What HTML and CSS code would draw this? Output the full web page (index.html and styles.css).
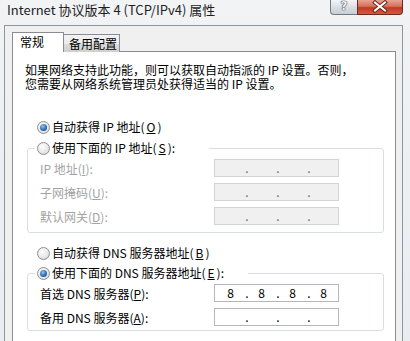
FILE: index.html
```html
<!DOCTYPE html>
<html lang="zh-CN">
<head>
    <meta charset="UTF-8">
    <title>Internet 协议版本 4 (TCP/IPv4) 属性</title>
    <link rel="stylesheet" href="styles.css">
</head>
<body>
    <!-- Title bar -->
    <div class="titlebar">
        <span class="title">Internet 协议版本 4 (TCP/IPv4) 属性</span>
        <div class="caption-btns">
            <span class="btn-help">?</span>
            <span class="btn-close">
                <svg width="46" height="15" viewBox="0 0 46 15">
                    <path d="M18 3.5 L28 11.5 M28 3.5 L18 11.5" stroke="#6b2418" stroke-width="4" stroke-linecap="square"/>
                    <path d="M18 3.5 L28 11.5 M28 3.5 L18 11.5" stroke="#fff" stroke-width="2" stroke-linecap="square"/>
                </svg>
            </span>
        </div>
    </div>

    <div class="client">
        <!-- Tabs -->
        <div class="tabs">
            <span class="tab active">常规</span>
            <span class="tab">备用配置</span>
        </div>

        <div class="panel">
            <p class="intro">如果网络支持此功能，则可以获取自动指派的 IP 设置。否则，<br>您需要从网络系统管理员处获得适当的 IP 设置。</p>

            <div class="option"><span class="radio on"></span>自动获得 IP 地址(<u>O</u>)</div>

            <fieldset class="group disabled">
                <legend class="option ip-legend"><span class="radio"></span>使用下面的 IP 地址(<u>S</u>):</legend>
                <div class="field">
                    <span class="label">IP 地址(<u>I</u>):</span>
                    <span class="ip"><span class="oct"></span><span class="dot">.</span><span class="oct"></span><span class="dot">.</span><span class="oct"></span><span class="dot">.</span><span class="oct"></span></span>
                </div>
                <div class="field">
                    <span class="label">子网掩码(<u>U</u>):</span>
                    <span class="ip"><span class="oct"></span><span class="dot">.</span><span class="oct"></span><span class="dot">.</span><span class="oct"></span><span class="dot">.</span><span class="oct"></span></span>
                </div>
                <div class="field">
                    <span class="label">默认网关(<u>D</u>):</span>
                    <span class="ip"><span class="oct"></span><span class="dot">.</span><span class="oct"></span><span class="dot">.</span><span class="oct"></span><span class="dot">.</span><span class="oct"></span></span>
                </div>
            </fieldset>

            <div class="option dns-auto"><span class="radio"></span>自动获得 DNS 服务器地址(<u>B</u>)</div>

            <fieldset class="group dns-group">
                <legend class="option dns-legend"><span class="radio on"></span>使用下面的 DNS 服务器地址(<u>E</u>):</legend>
                <div class="field">
                    <span class="label">首选 DNS 服务器(<u>P</u>):</span>
                    <span class="ip"><span class="oct">8</span><span class="dot">.</span><span class="oct">8</span><span class="dot">.</span><span class="oct">8</span><span class="dot">.</span><span class="oct">8</span></span>
                </div>
                <div class="field">
                    <span class="label">备用 DNS 服务器(<u>A</u>):</span>
                    <span class="ip"><span class="oct"></span><span class="dot">.</span><span class="oct"></span><span class="dot">.</span><span class="oct"></span><span class="dot">.</span><span class="oct"></span></span>
                </div>
            </fieldset>
        </div>
    </div>
</body>
</html>
```

FILE: styles.css
```css
body {
    margin: 0;
    width: 410px;
    height: 341px;
    overflow: hidden;
    background: linear-gradient(#f1f3f5, #e9edf1);
    font-family: "Noto Sans CJK SC", sans-serif;
    font-size: 12px;
    color: #000;
}

/* Title bar */
.titlebar {
    height: 25px;
    display: flex;
    justify-content: space-between;
    align-items: flex-start;
}

.title {
    padding-left: 7px;
    line-height: 20px;
    font-size: 13px;
    color: #1e1e1e;
}

.caption-btns {
    display: flex;
    margin-right: 7px;
}

.btn-help {
    width: 27px;
    height: 15px;
    box-sizing: border-box;
    border: 1px solid #707b87;
    border-top: none;
    border-right: none;
    border-radius: 0 0 0 4px;
    background: linear-gradient(#f4f5f6, #d9dde2 55%, #c9ced4);
    text-align: center;
    line-height: 13px;
    font-family: "DejaVu Sans", sans-serif;
    font-size: 12px;
    font-weight: bold;
    color: #eef0f2;
    text-shadow: 0 0 1px #3c4650, 0 0 1px #3c4650, 0 0 1px #3c4650;
}

.btn-close {
    width: 46px;
    height: 15px;
    box-sizing: border-box;
    border: 1px solid #6f2a20;
    border-top: none;
    border-radius: 0 0 4px 0;
    background: linear-gradient(#e8a595, #d4705c 45%, #c13a24 55%, #d15a3f);
}

.btn-close svg {
    display: block;
    margin: -1px 0 0 -1px;
}

/* Client area */
.client {
    margin: 0 7px 0 4px;
    height: 316px;
    background: #f0f0f0;
    border: 1px solid #8e969e;
    border-bottom: none;
}

.tabs {
    display: flex;
    align-items: flex-end;
    margin: 6px 0 -1px 7px;
    height: 20px;
}

.tab {
    box-sizing: border-box;
    height: 18px;
    width: 57px;
    margin-left: -1px;
    padding-left: 5px;
    border: 1px solid #898c95;
    border-bottom: none;
    background: linear-gradient(#f2f2f2, #ebebeb 50%, #dddddd 51%, #cfcfcf);
    line-height: 17px;
}

.tab.active {
    position: relative;
    z-index: 1;
    height: 20px;
    width: 52px;
    margin-left: 0;
    padding-left: 7px;
    background: #fff;
    line-height: 18px;
}

.panel {
    margin-left: 7px;
    width: 384px;
    box-sizing: border-box;
    height: 290px;
    background: #fff;
    border: 1px solid #898c95;
    border-bottom: none;
}

.intro {
    margin: 11px 0 0 12px;
    line-height: 14px;
    white-space: nowrap;
}

/* Radio options */
.option {
    display: flex;
    align-items: center;
    gap: 2px;
    height: 16px;
    line-height: 16px;
    white-space: nowrap;
}

.panel > .option {
    margin: 28px 0 0 24px;
}

.panel > .dns-auto {
    margin-top: 12px;
}

.radio {
    width: 13px;
    height: 13px;
    box-sizing: border-box;
    border-radius: 50%;
    border: 1px solid #8f8f8f;
    background: radial-gradient(circle at 40% 35%, #ffffff, #e6e6e6 60%, #cfcfcf);
    display: flex;
    align-items: center;
    justify-content: center;
}

.radio.on::after {
    content: "";
    width: 7px;
    height: 7px;
    border-radius: 50%;
    background: radial-gradient(circle at 40% 35%, #8ec6f2, #2d6fb5 55%, #163f73);
}

/* Group boxes */
.group {
    margin: 5px 0 0 14px;
    width: 357px;
    box-sizing: border-box;
    padding: 0 0 4px 0;
    border: 1px solid #d5dfe5;
    border-radius: 3px;
}

.group legend {
    margin-left: 7px;
    padding: 0 2px;
    box-sizing: border-box;
}

.ip-legend {
    width: 174px;
}

.dns-legend {
    width: 213px;
}

.dns-group {
    margin-top: 4px;
    padding-bottom: 1px;
}

.field {
    display: flex;
    align-items: center;
    height: 24px;
    padding-left: 12px;
}

.label {
    width: 174px;
    white-space: nowrap;
}

.ip {
    display: flex;
    box-sizing: border-box;
    width: 125px;
    height: 18px;
    padding-left: 3px;
    border: 1px solid #b4b7bd;
    background: #fff;
    line-height: 16px;
}

.oct {
    width: 25px;
    text-align: center;
}

.dot {
    width: 6px;
    padding-left: 2px;
    box-sizing: border-box;
    text-align: center;
}

.disabled .label {
    color: #a3a3a3;
}

.disabled .ip {
    background: #f0f0f0;
    border-color: #d3d3d3;
    color: #6d6d6d;
}
```
